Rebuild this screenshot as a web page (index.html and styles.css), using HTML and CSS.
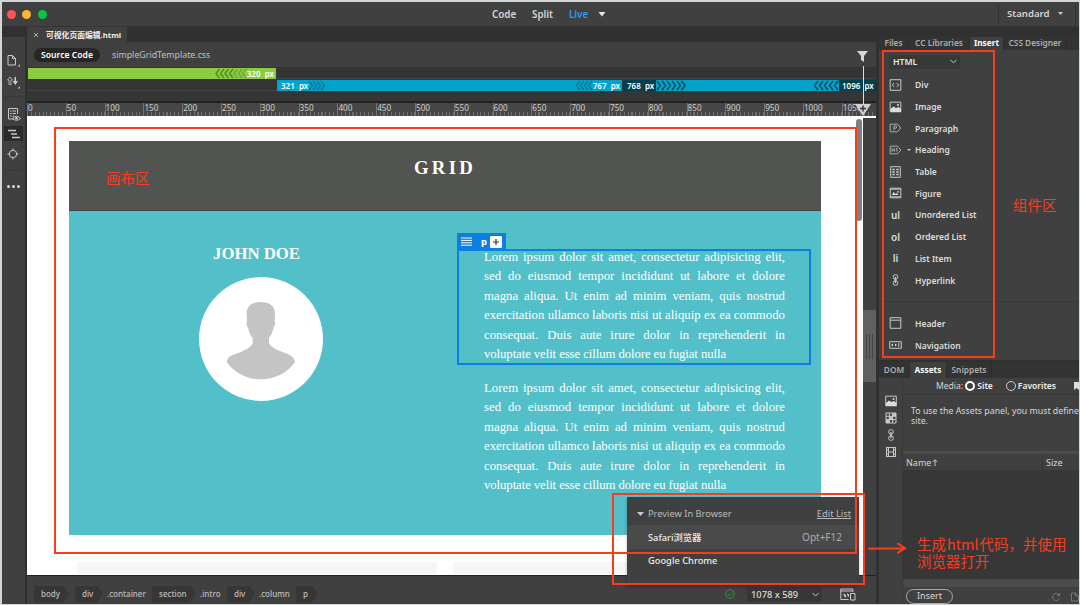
FILE: index.html
```html
<!DOCTYPE html>
<html lang="zh-CN">
<head>
    <meta charset="UTF-8">
    <meta name="viewport" content="width=device-width, initial-scale=1.0">
    <title>可视化页面编辑.html</title>
    <link rel="stylesheet" href="styles.css">
</head>
<body>
<div class="window">
    <header class="titlebar">
        <div class="lights"><i class="red"></i><i class="yellow"></i><i class="green"></i></div>
        <nav class="views">
            <span class="v-code">Code</span>
            <span class="v-split">Split</span>
            <span class="v-live">Live</span>
            <svg width="8" height="5" viewBox="0 0 8 5"><path d="M.5 0h7L4 4.5z" fill="#e6e6e6"/></svg>
        </nav>
        <div class="standard"><span>Standard</span><svg width="5" height="3" viewBox="0 0 5 3"><path d="M0 0h5L2.500 3z" fill="#ccc"/></svg></div>
    </header>

    <div class="workspace">
        <aside class="toolbar">
            <div class="tool t-file">
                <svg width="16" height="16" viewBox="0 0 16 16"><path d="M3 3.500h4.500l3 3v6.500H3zM7.500 3.500v3h3" class="ln"/><path d="M15 14.500v-2.500l-2.500 2.500z" fill="#bbb"/></svg>
            </div>
            <div class="tool t-sync">
                <svg width="16" height="16" viewBox="0 0 16 16"><path d="M4 11.500V7H2.500l2.500-3 2.500 3H6v4.500z" class="ln thin"/><path d="M9.500 4h1.500v4h2l-2.700 4-2.800-4h2z" fill="#ccc"/><path d="M15 15.500v-2.500l-2.500 2.500z" fill="#bbb"/></svg>
            </div>
            <div class="tool t-inspect">
                <svg width="16" height="16" viewBox="0 0 16 16"><path d="M8 13H2.500V2.500h9V8M4 5h1.500M6.500 5H10M4 7.500h1.500M6.500 7.500H10M4 10h1.500M6.500 10H8" class="ln"/><path d="M6.500 12.500q4-4.500 8 0-4 3.500-8 0z" class="ln"/><circle cx="10.500" cy="12.300" r="1.300" fill="#ccc"/></svg>
            </div>
            <div class="tool t-indent">
                <svg width="14" height="10" viewBox="0 0 14 10"><path d="M1 1.500h8M4 5h6M5 8.500h8" class="ln heavy"/></svg>
            </div>
            <div class="tool t-target">
                <svg width="12" height="12" viewBox="0 0 12 12"><circle cx="6" cy="6" r="3.700" class="ln"/><path d="M6 .5v2.500M6 9v2.500M.5 6h2.500M9 6h2.500" class="ln"/></svg>
            </div>
            <div class="tool t-more"><i></i><i></i><i></i></div>
        </aside>

        <main class="editor">
            <div class="doc-tabs">
                <div class="doc-tab"><svg width="6" height="6" viewBox="0 0 6 6"><path d="M1 1l4 4M5 1L1 5" class="ln thin"/></svg><b>可视化页面编辑.html</b></div>
            </div>
            <div class="related">
                <span class="pill">Source Code</span>
                <span class="css-file">simpleGridTemplate.css</span>
                <svg class="funnel" width="11" height="12" viewBox="0 0 11 12"><path d="M0 0h11L7 5v6L4 9V5z" fill="#d8d8d8"/></svg>
            </div>
            <div class="queries">
                <div class="q-row">
                    <div class="q-green">
                        <svg width="32" height="11" viewBox="0 0 32 11"><path d="M4.500 1L1 5.500 4.500 10M9 1L5.500 5.500 9 10M13.500 1L10 5.500l3.500 4.500M18 1l-3.500 4.500L18 10" class="chev c-green"/><path d="M22.500 1L19 5.500l3.500 4.500M27 1l-3.500 4.500L27 10M31 1l-3.500 4.500L31 10" class="chev c-green faint"/></svg>
                        <span>320&nbsp; px</span>
                    </div>
                </div>
                <div class="q-row">
                    <div class="q-blue">
                        <span>321&nbsp; px</span>
                        <svg width="18" height="11" viewBox="0 0 18 11"><path d="M1 1l3.500 4.500L1 10M5 1l3.500 4.500L5 10M9 1l3.500 4.500L9 10M13 1l3.500 4.500L13 10" class="chev c-blue"/></svg>
                        <svg class="to-right" width="18" height="11" viewBox="0 0 18 11"><path d="M5 1L1.500 5.500 5 10M9 1L5.500 5.500 9 10M13 1L9.500 5.500 13 10M17 1l-3.500 4.500L17 10" class="chev c-blue"/></svg>
                        <span>767&nbsp; px</span>
                    </div>
                    <div class="q-blue q-last">
                        <span class="dark">768&nbsp; px</span>
                        <svg width="30" height="11" viewBox="0 0 30 11"><path d="M1 1l3.500 4.500L1 10M6 1l3.500 4.500L6 10M11 1l3.500 4.500L11 10M16 1l3.500 4.500L16 10M21 1l3.500 4.500L21 10M25.500 1L29 5.500 25.500 10" class="chev c-dark"/></svg>
                        <svg class="to-right" width="26" height="11" viewBox="0 0 26 11"><path d="M5 1L1.500 5.500 5 10M10 1L6.500 5.500 10 10M15 1l-3.500 4.500L15 10M20 1l-3.500 4.500L20 10M25 1l-3.500 4.500L25 10" class="chev c-dark"/></svg>
                        <span class="dark end">1096 &nbsp;px</span>
                    </div>
                </div>
            </div>
            <div class="ruler">
                <span>0</span><span>50</span><span>100</span><span>150</span><span>200</span><span>250</span><span>300</span><span>350</span><span>400</span><span>450</span><span>500</span><span>550</span><span>600</span><span>650</span><span>700</span><span>750</span><span>800</span><span>850</span><span>900</span><span>950</span><span>1000</span><span>1050</span>
            </div>

            <div class="stage">
                <div class="canvas">
                    <div class="page">
                        <div class="page-header"><h1>GRID</h1></div>
                        <section class="intro">
                            <div class="column profile">
                                <h3>JOHN DOE</h3>
                                <svg width="124" height="124" viewBox="0 0 372 372">
                                    <circle cx="186" cy="186" r="186" fill="#fff"/>
                                    <path d="M185 75c-29 0-42 14-42 34l1 25c-3 4-1 14 3 17 3 17 8 26 14 32v15c-3 11-19 20-36 27-29 10-40 15-42 30 24 34 62 52 102 52s80-18 103-52c-4-17-17-22-43-32-19-7-30-15-35-25v-15c6-7 11-17 14-33 4-3 6-13 3-17l1-24c0-20-14-34-43-34z" fill="#c4c4c4"/>
                                </svg>
                            </div>
                            <div class="column text">
                                <div class="selected">
                                    <div class="badge">
                                        <svg width="11" height="9" viewBox="0 0 11 9"><path d="M0 1h11M0 3.400h11M0 5.800h11M0 8.200h11" stroke="#fff"/></svg>
                                        <b>p</b>
                                        <span><svg width="8" height="8" viewBox="0 0 8 8"><path d="M4 1v6M1 4h6" stroke="#333" stroke-width="1.200"/></svg></span>
                                    </div>
                                    <p>
                                        <span>Lorem ipsum dolor sit amet, consectetur adipisicing elit,</span>
                                        <span>sed do eiusmod tempor incididunt ut labore et dolore</span>
                                        <span>magna aliqua. Ut enim ad minim veniam, quis nostrud</span>
                                        <span>exercitation ullamco laboris nisi ut aliquip ex ea commodo</span>
                                        <span>consequat. Duis aute irure dolor in reprehenderit in</span>
                                        <span class="last">voluptate velit esse cillum dolore eu fugiat nulla</span>
                                    </p>
                                </div>
                                <p class="second">
                                    <span>Lorem ipsum dolor sit amet, consectetur adipisicing elit,</span>
                                    <span>sed do eiusmod tempor incididunt ut labore et dolore</span>
                                    <span>magna aliqua. Ut enim ad minim veniam, quis nostrud</span>
                                    <span>exercitation ullamco laboris nisi ut aliquip ex ea commodo</span>
                                    <span>consequat. Duis aute irure dolor in reprehenderit in</span>
                                    <span class="last">voluptate velit esse cillum dolore eu fugiat nulla</span>
                                </p>
                            </div>
                        </section>
                        <div class="boxes"><i></i><i></i></div>
                    </div>
                    <div class="scrollbar"><i></i></div>
                </div>
                <div class="gutter"><div class="grip"><i></i><i></i><i></i></div></div>
            </div>

            <footer class="status">
                <div class="crumbs">
                    <span class="tag c1">body</span>
                    <span class="tag c2">div</span><span class="cls k1">.container</span>
                    <span class="tag c3">section</span><span class="cls k2">.intro</span>
                    <span class="tag c2">div</span><span class="cls k3">.column</span>
                    <span class="tag c4">p</span>
                </div>
                <svg class="ok" width="10" height="10" viewBox="0 0 10 10"><circle cx="5" cy="5" r="4.300" fill="none" stroke="#31923b"/><path d="M2.700 5l1.700 1.800 3-3.300" fill="none" stroke="#31923b"/></svg>
                <div class="size">1078 x 589 <svg width="7" height="5" viewBox="0 0 7 5"><path d="M.5 1l3 3 3-3" class="ln"/></svg></div>
                <svg class="preview" width="16" height="13" viewBox="0 0 16 13"><path d="M8.500 11.500H.8V1h12v3M.8 3h12" class="ln"/><path d="M10.500 5.500h4.500v6.500h-4.500z" class="ln"/><path d="M3 5.500l2.500 1 1 3-2-.5zM7 5l2 1.500V9L7.500 8z" fill="#ccc"/></svg>
            </footer>
        </main>

        <aside class="panels">
            <div class="tabs top">
                <span class="w1">Files</span><span class="w2">CC Libraries</span><span class="w3 active">Insert</span><span class="w4">CSS Designer</span>
            </div>
            <div class="insert">
                <div class="select">HTML <svg width="7" height="5" viewBox="0 0 7 5"><path d="M.5 1l3 2.700 3-2.700" class="ln"/></svg></div>
                <ul>
                    <li><svg width="12" height="12" viewBox="0 0 12 12"><path d="M.7.700h10.600v10.600H.7zM4.800 4L2.800 6l2 2M7.200 4l2 2-2 2" class="ln"/></svg>Div</li>
                    <li><svg width="12" height="12" viewBox="0 0 12 12"><path d="M.7 1.200h10.600v9.600H.7z" class="ln"/><path d="M1 8l3-2.500 2.500 1.500L9 6l2.500 2v3H1z" fill="#ddd"/><circle cx="8.500" cy="4" r="1" fill="#ddd"/></svg>Image</li>
                    <li><svg width="12" height="12" viewBox="0 0 12 12"><path d="M.7 2.200H8L11.300 6 8 9.800H.7zM4.500 8.200V4h1.700q1 0 1 1.100t-1 1.100H4.500" class="ln thin"/></svg>Paragraph</li>
                    <li><svg width="12" height="12" viewBox="0 0 12 12"><path d="M.7 2.200H8L11.300 6 8 9.800H.7zM2.500 4.300v3.400M4.900 4.300v3.400M2.500 6h2.400M6.400 4.800l1-.5v3.400" class="ln thin"/></svg>Heading<svg class="caret" width="4" height="2" viewBox="0 0 4 2"><path d="M0 0h4L2 2z" fill="#ccc"/></svg></li>
                    <li><svg width="12" height="12" viewBox="0 0 12 12"><path d="M1.200.7h9.600v10.600H1.200z" class="ln"/><path d="M2.800 3.500h2.500M6.700 3.500h2.500M2.800 6h2.500M6.700 6h2.500M2.800 8.500h2.500M6.700 8.500h2.500" class="ln heavy"/></svg>Table</li>
                    <li><svg width="12" height="12" viewBox="0 0 12 12"><path d="M.7 1.200h10.600v9.600H.7zM.7 9.800h10.600M.7 2.200h10.600" class="ln"/><path d="M2.500 8l1.500-3 2 2 1.500-1L9 8z" fill="#ddd"/><circle cx="8.500" cy="4.800" r=".9" fill="#ddd"/></svg>Figure</li>
                    <li><em>ul</em>Unordered List</li>
                    <li><em>ol</em>Ordered List</li>
                    <li><em>li</em>List Item</li>
                    <li><svg width="12" height="12" viewBox="0 0 12 12"><rect x="3.700" y=".7" width="4.600" height="4.500" rx="2" class="ln"/><rect x="3.700" y="6.800" width="4.600" height="4.500" rx="2" class="ln"/><path d="M6 3v6" class="ln heavy"/></svg>Hyperlink</li>
                    <li class="sep"></li>
                    <li><svg width="12" height="12" viewBox="0 0 12 12"><path d="M.7.700h10.600v10.600H.7zM.7 3.200h10.600" class="ln"/></svg>Header</li>
                    <li><svg width="13" height="12" viewBox="0 0 13 12"><path d="M.7 2.700h11.600v6.600H.7zM9.800 4v4" class="ln"/><path d="M2 6l2-1.500v3zM6 4.500L8 6 6 7.500z" fill="#ddd"/></svg>Navigation</li>
                </ul>
            </div>
            <div class="tabs bottom">
                <span class="w5">DOM</span><span class="w6 active">Assets</span><span class="w7">Snippets</span>
            </div>
            <div class="assets">
                <div class="asset-types">
                    <svg width="12" height="12" viewBox="0 0 12 12"><path d="M.7 1.200h10.600v9.600H.7z" class="ln"/><path d="M1 8l3-2.500 2.500 1.500L9 6l2.500 2v3H1z" fill="#ddd"/><circle cx="8.500" cy="4" r="1" fill="#ddd"/></svg>
                    <svg width="12" height="12" viewBox="0 0 12 12"><path d="M1 1h10v10H1zM1 4.300h10M1 7.600h10M4.300 1v10M7.600 1v10" class="ln"/><path d="M4.500 4.500h3v3h-3zM7.800 1.200H11v3H7.800zM1.200 7.800h3V11h-3z" fill="#ccc"/></svg>
                    <svg width="12" height="12" viewBox="0 0 12 12"><rect x="3.700" y=".7" width="4.600" height="4.500" rx="2" class="ln"/><rect x="3.700" y="6.800" width="4.600" height="4.500" rx="2" class="ln"/><path d="M6 3v6" class="ln heavy"/></svg>
                    <svg width="12" height="12" viewBox="0 0 12 12"><path d="M1.500 1v10M10.500 1v10M3.500 1v10M8.500 1v10M1.500 1.500h9M3.500 6h5M1.500 10.500h9M1.500 4h2M1.500 8h2M8.500 4h2M8.500 8h2" class="ln"/></svg>
                </div>
                <div class="asset-main">
                    <div class="media"><span>Media:</span><i class="on"></i><b>Site</b><i class="off"></i><b>Favorites</b><svg width="5" height="8" viewBox="0 0 5 8"><path d="M0 0h5v8L2.500 6 0 8z" fill="#ddd"/></svg></div>
                    <div class="hint">To use the Assets panel, you must define<br>site.</div>
                    <div class="divider"></div>
                    <div class="cols"><span>Name<svg width="6" height="7" viewBox="0 0 6 7"><path d="M3 7V1M.7 3L3 .7 5.300 3" class="ln"/></svg></span><span class="size-col">Size</span></div>
                    <div class="list"></div>
                    <div class="hscroll"></div>
                    <div class="asset-footer"><span>Insert</span>
                        <svg width="28" height="10" viewBox="0 0 28 10"><path d="M8 3A3.500 3.500 0 1 0 8.300 6.500M8.500 1v2.500H6" fill="none" stroke="#777"/><path d="M20.500 1h4l3 3v5h-7zM24.500 1v3h3" fill="none" stroke="#777"/></svg>
                    </div>
                </div>
            </div>
        </aside>
    </div>
</div>

<!-- width handle of the viewport -->
<div class="handle-line"></div>
<svg class="handle" width="16" height="12" viewBox="0 0 16 12"><path d="M0 0h16L8 12z" fill="#d0d0d0"/><path d="M8 1.500v6M5 4.500h6" stroke="#333" stroke-width="1.500"/></svg>

<div class="popup">
    <div class="popup-head"><svg width="7" height="4" viewBox="0 0 7 4"><path d="M0 0h7L3.500 4z" fill="#ccc"/></svg><span>Preview In Browser</span><u>Edit List</u></div>
    <div class="popup-item hover"><span>Safari浏览器</span><kbd>Opt+F12</kbd></div>
    <div class="popup-item"><span>Google Chrome</span></div>
</div>

<!-- annotations -->
<div class="mark m-canvas"></div>
<div class="mark m-insert"></div>
<div class="mark m-preview"></div>
<svg class="arrow" width="42" height="12" viewBox="0 0 42 12"><path d="M2 6.800l35-.6M31 1.700l7 4.500-7 4.500" fill="none" stroke="#f73c1f" stroke-width="2" stroke-linecap="round"/></svg>
<div class="note n-canvas">画布区</div>
<div class="note n-insert">组件区</div>
<div class="note n-preview">生成<span>html</span>代码，并使用<br>浏览器打开</div>
</body>
</html>
```
FILE: styles.css
```css
* {
    box-sizing: border-box;
}
body {
    margin: 0;
    height: 605px;
    overflow: hidden;
    padding: 2px 1px 1px 2px;
    background: #d3d6d6;
    font-family: "Noto Sans", "Noto Sans CJK SC", sans-serif;
    font-size: 9px;
    color: #d6d6d6;
}
svg {
    display: block;
    flex: none;
}
.ln {
    fill: none;
    stroke: #c8c8c8;
    stroke-width: 1;
}
.thin {
    stroke-width: .8;
}
.heavy {
    stroke-width: 1.400;
}
i {
    display: block;
    flex: none;
}
.window {
    display: flex;
    flex-direction: column;
    height: 602px;
    background: #404040;
}

/* title bar */
.titlebar {
    display: flex;
    align-items: center;
    height: 25px;
    flex: none;
    background: #404040;
    border-bottom: 1px solid #343434;
}
.lights {
    display: flex;
    gap: 6.500px;
    padding-left: 4.500px;
    width: 490px;
}
.lights i {
    width: 9px;
    height: 9px;
    border-radius: 50%;
}
.red { background: #ff5450; }
.yellow { background: #fdb32e; }
.green { background: #08c73e; }
.views {
    display: flex;
    align-items: center;
    font-size: 9.800px;
    font-weight: 600;
    flex: 1;
}
.v-code { width: 40px; }
.v-split { width: 37px; }
.v-live {
    width: 29px;
    color: #2b9cf0;
}
.standard {
    display: flex;
    align-items: center;
    justify-content: space-between;
    width: 78px;
    height: 22px;
    padding: 0 12px 2px 8px;
    border-left: 1px solid #333;
    border-right: 1px solid #333;
    margin-right: 3px;
    font-size: 9.600px;
    font-weight: 600;
}

.workspace {
    display: flex;
    flex: 1;
    min-height: 0;
    background: #303030;
}

/* left tool strip */
.toolbar {
    width: 23px;
    margin-right: 2px;
    background: #404040;
    border-top: 10px solid #303030;
    padding: 12px 2px 0;
}
.tool {
    display: flex;
    align-items: center;
    justify-content: center;
    height: 21px;
}
.t-file { padding-right: 2px; }
.t-sync {
    height: 27px;
    padding: 0 2px 5px 0;
    border-bottom: 1px solid #383838;
}
.t-inspect {
    height: 25px;
    margin-top: 4px;
}
.t-indent {
    height: 15px;
    background: #2b2b2b;
}
.t-target {
    height: 30px;
    padding: 0 2px 3px 0;
    border-bottom: 1px solid #383838;
}
.t-more {
    gap: 2px;
    height: 31px;
}
.t-more i {
    width: 3px;
    height: 3px;
    border-radius: 50%;
    background: #d6d6d6;
}

/* editor */
.editor {
    display: flex;
    flex-direction: column;
    width: 849px;
    flex: none;
}
.doc-tabs {
    height: 15px;
    flex: none;
}
.doc-tab {
    display: flex;
    align-items: center;
    gap: 7px;
    width: 100px;
    height: 15px;
    padding-left: 6px;
    background: #404040;
    font-size: 7.800px;
    color: #eee;
    white-space: nowrap;
}
.related {
    display: flex;
    align-items: center;
    height: 25px;
    flex: none;
    padding: 1px 8px 0 7px;
    background: #404040;
}
.pill {
    width: 66px;
    height: 14px;
    line-height: 14px;
    border-radius: 7px;
    text-align: center;
    background: #262626;
    color: #fff;
    font-size: 8.600px;
    font-weight: 600;
}
.css-file {
    margin-left: 12px;
    flex: 1;
    color: #c0c0c0;
    font-size: 8.800px;
}
.queries {
    height: 36px;
    flex: none;
    padding-left: 1px;
    background: #353535;
    border-bottom: 2px solid #222;
}
.q-row {
    display: flex;
    height: 12px;
    padding-top: 1px;
    border-bottom: 1px solid #444;
}
.q-green {
    display: flex;
    justify-content: flex-end;
    width: 248px;
    height: 11px;
    background: #8ccc40;
    padding-right: 2px;
}
.q-row span {
    font: 600 8px/11px "Noto Sans", sans-serif;
    color: #fff;
    white-space: nowrap;
}
.q-blue {
    display: flex;
    width: 345px;
    height: 11px;
    margin-left: 249px;
    padding: 0 2px 0 4px;
    background: #02a3cb;
    flex: none;
}
.q-blue.q-last {
    width: 253px;
    margin-left: 1px;
    padding: 0;
}
.to-right { margin-left: auto; }
.q-row .dark {
    background: #02404e;
    width: 33px;
    padding-left: 4px;
}
.q-row .end {
    width: 37px;
    padding-left: 3px;
}
.chev {
    fill: none;
    stroke-width: 1.500;
}
.c-green { stroke: #4f8c22; }
.faint { opacity: .5; }
.c-blue { stroke: #087a9a; }
.c-dark { stroke: #044a5b; }
.ruler {
    display: flex;
    height: 13px;
    flex: none;
    background: repeating-linear-gradient(90deg, #707070 0, #707070 1px, transparent 1px, transparent 3.875px) 0 100% / 100% 4px no-repeat #464646;
}
.ruler span {
    flex: none;
    width: 38.800px;
    border-left: 1px solid #747474;
    font-size: 8.200px;
    line-height: 9px;
    color: #cecece;
}
.ruler span:last-child { width: 34px; }

/* canvas */
.stage {
    display: flex;
    flex: 1;
    min-height: 0;
    background: #404040;
    border-bottom: 1px solid #222;
}
.canvas {
    display: flex;
    flex: none;
    width: 836px;
    background: #fff;
}
.page {
    width: 794px;
    padding: 25px 0 0 42px;
    font-family: "Liberation Serif", serif;
}
.page-header {
    height: 70px;
    background: #525451;
    border-bottom: 1px solid #3d4444;
    overflow: hidden;
}
.page-header h1 {
    margin: 16px 0 0;
    text-align: center;
    font-size: 18.800px;
    line-height: 22px;
    letter-spacing: 3.200px;
    color: #fff;
}
.intro {
    display: flex;
    height: 324px;
    background: #52bfc9;
    color: #fff;
}
.profile {
    width: 388px;
    display: flex;
    flex-direction: column;
    align-items: center;
    padding-right: 13px;
}
.profile h3 {
    margin: 33px 0 13px;
    font-size: 16.800px;
    line-height: 20px;
    letter-spacing: -.05px;
}
.profile svg { margin-left: 8px; }
.text {
    padding-top: 38px;
}
.selected {
    position: relative;
    width: 354px;
    height: 116px;
    border: 2px solid #0d7fe0;
    padding: 0 24px;
}
.badge {
    position: absolute;
    left: -2px;
    top: -18px;
    display: flex;
    align-items: center;
    width: 49px;
    height: 17px;
    padding-left: 4px;
    background: #0d7fe0;
    font: 9.500px "Noto Sans", sans-serif;
}
.badge b {
    width: 18px;
    padding: 0 0 1px 9px;
}
.badge span {
    width: 12px;
    height: 12px;
    padding: 2px;
    background: #fff;
    border-radius: 1px;
}
.text p {
    width: 301px;
    margin: -3px 0 0 1px;
    font-size: 12.800px;
    line-height: 19.400px;
}
.text p span {
    display: block;
    white-space: nowrap;
    text-align-last: justify;
}
.text p .last {
    text-align-last: left;
    letter-spacing: -.1px;
}
.text p.second {
    margin: 14px 0 0 27px;
}
.boxes {
    display: flex;
    gap: 16px;
    padding: 27px 8px 0;
}
.boxes i {
    width: 360px;
    height: 12px;
    background: #f6f6f6;
    border-radius: 2px;
}
.scrollbar {
    flex: 1;
    padding: 3px 1px 0 35px;
}
.scrollbar i {
    width: 6px;
    height: 102px;
    border-radius: 3px;
    background: #808080;
}
.gutter {
    flex: 1;
    padding-top: 194px;
    border-top: 2px solid #fff;
    background: #404040;
}
.grip {
    display: flex;
    align-items: center;
    justify-content: center;
    gap: 2px;
    height: 72px;
    margin-top: -2px;
    background: #606060;
}
.grip i {
    width: 1px;
    height: 25px;
    background: #444;
}

/* status bar */
.status {
    display: flex;
    align-items: center;
    height: 28px;
    flex: none;
    padding: 8px 0 0 7px;
    background: #404040;
}
.crumbs {
    display: flex;
    align-items: center;
    width: 691px;
    font-size: 8px;
    font-weight: 500;
    color: #bdbdbd;
}
.tag {
    height: 17px;
    line-height: 16px;
    padding-left: 7px;
    background: #363636;
    clip-path: polygon(0 0, calc(100% - 6px) 0, 100% 50%, calc(100% - 6px) 100%, 0 100%);
}
.c1 { width: 35px; margin-right: 6px; }
.c2 { width: 28px; }
.c3 { width: 44px; }
.c4 { width: 22px; }
.cls {
    height: 17px;
    line-height: 16px;
    padding-left: 4px;
    white-space: nowrap;
}
.k1 { width: 49px; }
.k2 { width: 31px; }
.k3 { width: 41px; }
.size {
    display: flex;
    align-items: center;
    justify-content: space-between;
    width: 75px;
    height: 15px;
    margin: 0 18px 0 12px;
    padding: 0 3px 0 4px;
    background: #373737;
    color: #ddd;
    font-size: 9.300px;
    font-weight: 500;
    white-space: nowrap;
}

/* right panels */
.panels {
    display: flex;
    flex-direction: column;
    width: 200px;
    margin-left: 3px;
    overflow: hidden;
    background: #404040;
}
.tabs {
    display: flex;
    flex: none;
    background: #333;
    color: #adadad;
    font-size: 8.300px;
    font-weight: 600;
}
.tabs span {
    height: 100%;
    text-align: center;
    white-space: nowrap;
    border-right: 1px solid #2c2c2c;
}
.tabs .active {
    background: #404040;
    color: #fff;
    font-weight: 700;
}
.top {
    height: 23px;
    line-height: 11px;
    border-top: 10px solid #303030;
}
.w1 { width: 30px; }
.w2 { width: 61px; }
.w3 { width: 34px; }
.w4 { width: 63px; }
.insert {
    height: 312px;
    flex: none;
    padding: 5px 0 0;
    border-bottom: 2px solid #303030;
}
.select {
    display: flex;
    align-items: center;
    justify-content: space-between;
    width: 71px;
    height: 14px;
    margin-left: 10px;
    padding: 0 3px 1px 4px;
    background: #383838;
    color: #e6e6e6;
    font-size: 8.700px;
    font-weight: 600;
}
.insert ul {
    list-style: none;
    margin: 5px 0 0;
    padding: 0;
}
.insert li {
    display: flex;
    align-items: center;
    position: relative;
    height: 21.700px;
    padding-left: 10px;
    color: #dcdcdc;
    font-size: 8.500px;
    font-weight: 600;
}
.insert li > svg:first-child,
.insert em {
    width: 13px;
    margin-right: 13px;
}
.insert em {
    font-style: normal;
    font-size: 10px;
    text-align: center;
}
.insert .caret {
    position: absolute;
    left: 28px;
    top: 10px;
}
.insert .sep::before {
    content: "";
    position: absolute;
    left: 0;
    right: 0;
    top: 10px;
    border-top: 1px solid #383838;
}
.bottom {
    height: 16px;
    line-height: 15px;
}
.w5 { width: 31px; }
.w6 { width: 37px; }
.w7 { width: 45px; }
.assets {
    display: flex;
    flex: 1;
    min-height: 0;
}
.asset-types {
    display: flex;
    flex-direction: column;
    align-items: center;
    gap: 5px;
    width: 23px;
    padding-top: 17px;
}
.asset-main {
    display: flex;
    flex-direction: column;
    flex: 1;
    min-width: 0;
    border-left: 1px solid #373737;
    white-space: nowrap;
}
.media {
    display: flex;
    align-items: center;
    height: 17px;
    padding: 0 0 1px 33px;
    border-bottom: 1px solid #373737;
}
.media b {
    font-size: 8.500px;
    font-weight: 600;
    color: #eee;
    margin-left: 2px;
}
.media i {
    width: 10px;
    height: 10px;
    border-radius: 50%;
}
.media span {
    width: 30px;
    font-size: 8.500px;
}
.media .on { border: 2.500px solid #fff; }
.media .off {
    border: 1px solid #ccc;
    margin-left: 13px;
}
.media svg { margin-left: 18px; }
.hint {
    height: 56px;
    padding: 11px 0 0 8px;
    line-height: 10px;
    font-size: 8.800px;
}
.divider {
    height: 3px;
    background: #4b4b4b;
}
.cols {
    display: flex;
    height: 16px;
    line-height: 15px;
    padding-left: 3px;
}
.cols span {
    display: flex;
    align-items: center;
    gap: 1px;
    flex: none;
    width: 136px;
}
.cols .size-col {
    width: 36px;
    padding-left: 3px;
    border-left: 1px solid #333;
}
.list {
    flex: 1;
    background: #373737;
}
.hscroll {
    height: 8px;
    flex: none;
    background: #4b4b4b;
    border-radius: 4px 0 0 4px;
}
.asset-footer {
    display: flex;
    align-items: center;
    justify-content: space-between;
    height: 17px;
    flex: none;
    padding: 2px 0 0 3px;
}
.asset-footer span {
    width: 47px;
    height: 15px;
    line-height: 12px;
    border: 1px solid #aaa;
    border-radius: 8px;
    text-align: center;
}

/* overlays */
.handle-line {
    position: absolute;
    left: 863px;
    top: 66px;
    width: 1px;
    height: 40px;
    background: #ddd;
}
.funnel { margin-top: 3px; }
.handle {
    position: absolute;
    left: 855px;
    top: 104px;
}
.popup {
    position: absolute;
    left: 627px;
    top: 497px;
    width: 232px;
    height: 88px;
    background: #404040;
    box-shadow: 0 2px 3px rgba(0, 0, 0, .25);
}
.popup-head,
.popup-item {
    display: flex;
    align-items: center;
    height: 24px;
    padding: 0 17px 1px 21px;
    color: #eee;
    font-size: 9.300px;
    font-weight: 500;
}
.popup-head {
    height: 28px;
    padding: 5px 8px 0 10px;
    color: #bbb;
    font-weight: 400;
}
.popup-head span {
    flex: 1;
    margin-left: 4px;
}
.popup-item span { flex: 1; }
.popup-item kbd {
    font: 10px "Noto Sans", sans-serif;
    color: #aaa;
}
.hover { background: #4a4a4a; }

.mark {
    position: absolute;
    border: 2px solid #f73c1f;
}
.m-canvas {
    left: 54px;
    top: 127px;
    width: 803px;
    height: 427px;
}
.m-insert {
    left: 882px;
    top: 50px;
    width: 113px;
    height: 308px;
}
.m-preview {
    left: 612px;
    top: 493px;
    width: 253px;
    height: 92px;
}
.arrow {
    position: absolute;
    left: 867px;
    top: 542px;
}
.note {
    position: absolute;
    font-family: "Noto Sans CJK SC", sans-serif;
    font-size: 14.500px;
    line-height: 16.500px;
    color: #f73c1f;
    white-space: nowrap;
}
.n-canvas {
    left: 106px;
    top: 170px;
}
.n-insert {
    left: 1013px;
    top: 197px;
}
.n-preview {
    left: 917px;
    top: 536px;
}
.n-preview span {
    margin: 0 1px;
    letter-spacing: -.1px;
}
```
